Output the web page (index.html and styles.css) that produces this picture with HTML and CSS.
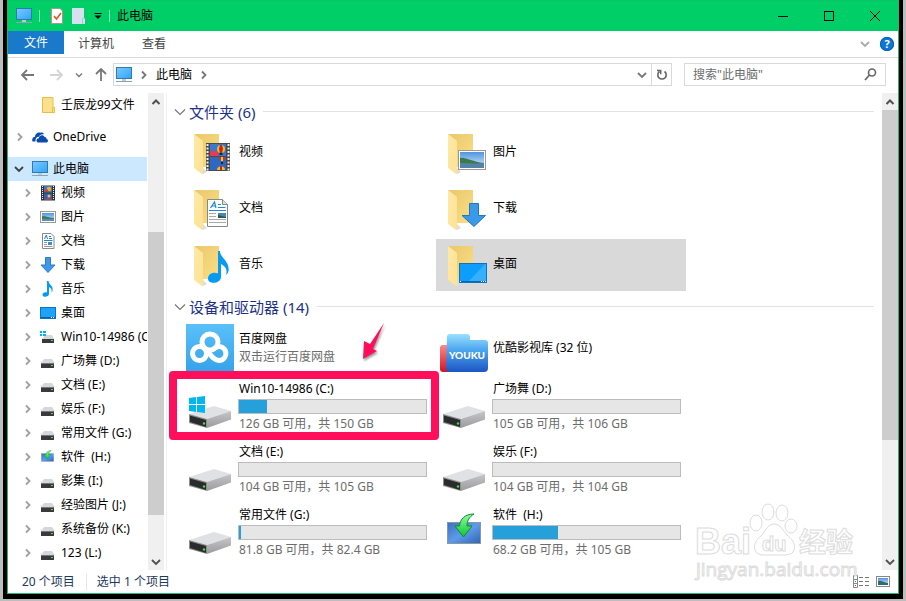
FILE: index.html
```html
<!DOCTYPE html>
<html lang="zh-CN">
<head>
    <meta charset="UTF-8">
    <meta name="viewport" content="width=device-width, initial-scale=1.0">
    <title>此电脑</title>
    <link rel="stylesheet" href="styles.css">
</head>
<body>
    <svg class="defs" aria-hidden="true">
        <defs>
            <linearGradient id="screen" x1="0" y1="0" x2="1" y2="1">
                <stop offset="0" stop-color="#7cc8ff"/>
                <stop offset="1" stop-color="#2ea6f5"/>
            </linearGradient>
            <linearGradient id="gold" x1="0" y1="0" x2="1" y2="1">
                <stop offset="0" stop-color="#eac76c"/>
                <stop offset="1" stop-color="#fbdf85"/>
            </linearGradient>
            <linearGradient id="flap" x1="0" y1="0" x2="1" y2="1">
                <stop offset="0" stop-color="#ffe9a6"/>
                <stop offset="1" stop-color="#fde293"/>
            </linearGradient>
            <linearGradient id="sky" x1="0" y1="0" x2="0" y2="1">
                <stop offset="0" stop-color="#4f95e0"/>
                <stop offset="1" stop-color="#dcecf8"/>
            </linearGradient>
            <linearGradient id="metal" x1="0" y1="0" x2="0" y2="1">
                <stop offset="0" stop-color="#c6c6c8"/>
                <stop offset="1" stop-color="#9b9b9d"/>
            </linearGradient>
            <linearGradient id="baidu" x1="0" y1="0" x2="0" y2="1">
                <stop offset="0" stop-color="#5ac0f8"/>
                <stop offset="1" stop-color="#35a3ea"/>
            </linearGradient>
            <linearGradient id="youku" x1="0" y1="0" x2="0" y2="1">
                <stop offset="0" stop-color="#9be0ff"/>
                <stop offset="0.4" stop-color="#4fa9f0"/>
                <stop offset="1" stop-color="#1c55c4"/>
            </linearGradient>
            <linearGradient id="red" x1="0" y1="0" x2="0" y2="1">
                <stop offset="0" stop-color="#f88"/>
                <stop offset="1" stop-color="#d01522"/>
            </linearGradient>
            <linearGradient id="green" x1="0" y1="0" x2="0" y2="1">
                <stop offset="0" stop-color="#8dffa0"/>
                <stop offset="1" stop-color="#0cc42c"/>
            </linearGradient>
            <linearGradient id="panel" x1="0" y1="0" x2="1" y2="1">
                <stop offset="0" stop-color="#3a6fc4"/>
                <stop offset="0.5" stop-color="#5d9bea"/>
                <stop offset="1" stop-color="#3263b4"/>
            </linearGradient>
        </defs>
        <symbol id="i-pc" viewBox="0 0 16 16">
            <rect x="0.5" y="0.5" width="15" height="11" fill="url(#screen)" stroke="#2f7ab0"/>
            <path d="M6 12h4v2H6z" fill="#b9cbd8"/>
            <path d="M0 14.500h16" stroke="#8ba4b5"/>
        </symbol>
        <symbol id="i-chev" viewBox="0 0 8 10">
            <path d="M2 1.5L5.5 5L2 8.5" fill="none" stroke="currentColor" stroke-width="1.8"/>
        </symbol>
        <symbol id="i-down" viewBox="0 0 10 8">
            <path d="M1 2L5 6L9 2" fill="none" stroke="currentColor" stroke-width="1.8"/>
        </symbol>
        <symbol id="i-thin" viewBox="0 0 12 8">
            <path d="M1 1.500L6 6.500L11 1.500" fill="none" stroke="currentColor" stroke-width="1.2"/>
        </symbol>
        <symbol id="i-up" viewBox="0 0 10 8">
            <path d="M1.5 6L5 2.5L8.5 6" fill="none" stroke="currentColor" stroke-width="2"/>
        </symbol>
        <symbol id="i-folder-s" viewBox="0 0 16 16">
            <path d="M2.5 0.5h10.500v10h1.500v5H2.500z" fill="#fde08a" stroke="#e8bd4a"/>
            <path d="M12.500 15v-4.500h2" fill="none" stroke="#e8bd4a"/>
        </symbol>
        <symbol id="i-cloud" viewBox="0 0 16 16">
            <path d="M0.500 12.500c-1-2.500 0.500-4.500 2.500-4.700c0-3 3-5 5.500-4c1-0.500 3 0 3.600 1.500c-3-0.500-4.600 0.700-5.100 2.500c-2.500 0-3.800 2-3.500 4.700z" fill="#0a4bb0"/>
            <path d="M5.500 13.500c-1.800-1-1.400-4.200 1.300-4.300c0.300-3.400 4.600-4 5.800-1.200c1.500 0 2 1 1.900 2c1.800 0.300 2 2.700 0.500 3.500z" fill="#0a4bb0"/>
        </symbol>
        <symbol id="i-film-s" viewBox="0 0 16 16">
            <rect x="1" y="0.500" width="14" height="15" fill="#333"/>
            <rect x="4" y="1" width="8" height="6.500" fill="#3f78c9"/>
            <rect x="4" y="8.500" width="8" height="6.500" fill="#2f63b5"/>
            <path d="M2.500 1v14M13.500 1v14" stroke="#eee" stroke-dasharray="1 1"/>
            <circle cx="9" cy="4" r="2.200" fill="#f0b020"/>
            <path d="M4 7l3-3l2 3zM6 15l2-3l3 3z" fill="#d8382c"/>
            <circle cx="9" cy="11" r="1.500" fill="#f5c830"/>
        </symbol>
        <symbol id="i-pic-s" viewBox="0 0 16 16">
            <rect x="0.500" y="2.500" width="15" height="11" fill="#fff" stroke="#9a9a9a"/>
            <rect x="2" y="4" width="12" height="8" fill="url(#sky)"/>
            <path d="M2 7c4 0 8 2 12 2v1H2z" fill="#3f7a63"/>
            <path d="M2 10h12v2H2z" fill="#5a8fb8"/>
        </symbol>
        <symbol id="i-doc-s" viewBox="0 0 16 16">
            <path d="M2.500 0.500h8.500l3 3v12H2.500z" fill="#fff" stroke="#8a8a8a"/>
            <path d="M4.500 6l1.800-4l1.200 4M9 3.500h2M9 5.500h3M4 7.500h8.500" fill="none" stroke="#1888d0"/>
            <path d="M4 9.500h3M4 11.500h3M4 13.500h8.500" stroke="#999"/>
            <rect x="8" y="9" width="4" height="3" fill="#4f87b5"/>
        </symbol>
        <symbol id="i-dl-s" viewBox="0 0 16 16">
            <path d="M5.500 0.500h5v7.500h4.500L8 15.500L1 8h4.500z" fill="#3d98e8" stroke="#2a7cc4"/>
        </symbol>
        <symbol id="i-note-s" viewBox="0 0 16 16">
            <path d="M7 0h1.500c0.500 4 5 4.500 4 9.500c0 1-0.600 1.500-1.200 2c1-3-0.300-4.500-2.300-5.500v7c0 3-6.500 4-6.500 0.700c0-2 2.500-3 4.500-2.200z" fill="#069af3"/>
        </symbol>
        <symbol id="i-desk-s" viewBox="0 0 16 16">
            <rect x="0.500" y="2.500" width="15" height="11" fill="#1aa3ff" stroke="#1272b8"/>
            <path d="M1 12.500h14" stroke="#0f5f9e"/>
            <path d="M11 12.500h4" stroke="#fff" stroke-dasharray="1 1"/>
        </symbol>
        <symbol id="i-drive-s" viewBox="0 0 16 16">
            <path d="M4 6h8l3 4H1z" fill="#d6d7da"/>
            <rect x="1" y="10" width="13" height="5" fill="#3a3a3c"/>
            <path d="M1 10.500h13" stroke="#777"/>
            <rect x="11" y="12" width="2" height="1" fill="#4fe04f"/>
        </symbol>
        <symbol id="i-win-s" viewBox="0 0 16 16">
            <path d="M5 6h7l2 4H2z" fill="#d6d7da"/>
            <rect x="2" y="10" width="12" height="4" fill="#3a3a3c"/>
            <rect x="11" y="11" width="2" height="1" fill="#4fe04f"/>
            <path d="M0 2h2v2H0zM3 2h3v2H3zM0 5h2v2H0zM3 5h3v2H3z" fill="#00b4ef"/>
        </symbol>
        <symbol id="i-soft" viewBox="0 0 34 32">
            <rect x="0.500" y="9.500" width="33" height="21" fill="url(#panel)" stroke="#8a9a9a"/>
            <path d="M27 1C18 1 13 6 12.500 13H8l8.500 11L25 13h-5c0-5 2-9 7-12z" fill="url(#green)" stroke="#148a2c"/>
        </symbol>
        <symbol id="i-folder" viewBox="0 0 48 48">
            <path d="M8 5h25v33H8z" fill="url(#gold)"/>
            <path d="M8 5l9 7v33l-1 0l-8-6z" fill="url(#flap)"/>
            <path d="M17 39v6l4-2z" fill="#ddd"/>
        </symbol>
        <symbol id="i-drive" viewBox="0 0 48 48">
            <path d="M3 31l25-8l17 5L21 36z" fill="#e0e1e4"/>
            <path d="M21 36l24-8v8.500L21 45z" fill="url(#metal)"/>
            <path d="M3 31l18 5v9L3 40z" fill="#8d8d90"/>
            <path d="M4 32.500l16 4.500v7L4 39z" fill="#2a2b2d"/>
            <circle cx="18" cy="40.500" r="1.200" fill="#3fe03f"/>
        </symbol>
    </svg>

    <div class="window">
        <header class="titlebar">
            <svg class="icon"><use href="#i-pc"/></svg>
            <span class="sep"></span>
            <button class="quick" aria-label="属性">
                <svg width="12" height="16" viewBox="0 0 12 16"><path d="M0.500 0.500H9l2.500 2.500v12.500H0.500z" fill="#fff" stroke="#a89a90"/><path d="M3 8l2.500 3L10 5" fill="none" stroke="#e8541c" stroke-width="1.600"/></svg>
            </button>
            <button class="quick" aria-label="新建文件夹">
                <svg width="13" height="16" viewBox="0 0 13 16"><path d="M0 0h12v10h1v6H0z" fill="#d5e0f0"/><path d="M10.500 16v-5.500H13" fill="none" stroke="#b4c4dc"/></svg>
            </button>
            <button class="quick" aria-label="自定义快速访问工具栏">
                <svg width="8" height="8" viewBox="0 0 8 8"><path d="M0.500 1.500h7" stroke="#000"/><path d="M0.500 3.500h7L4 7z" fill="#000"/></svg>
            </button>
            <span class="sep"></span>
            <h1>此电脑</h1>
            <div class="caption">
                <button aria-label="最小化"><svg width="10" height="10"><path d="M0 5.500h10" stroke="#000"/></svg></button>
                <button aria-label="最大化"><svg width="10" height="10"><rect x="0.500" y="0.500" width="9" height="9" fill="none" stroke="#000"/></svg></button>
                <button aria-label="关闭"><svg width="10" height="10"><path d="M0 0l10 10M10 0L0 10" stroke="#000"/></svg></button>
            </div>
        </header>

        <nav class="ribbon">
            <button class="tab file">文件</button>
            <button class="tab">计算机</button>
            <button class="tab">查看</button>
            <div class="ribbon-end">
                <button aria-label="展开功能区"><svg class="down light"><use href="#i-down"/></svg></button>
                <button class="help" aria-label="帮助">?</button>
            </div>
        </nav>

        <div class="toolbar">
            <div class="history">
                <button aria-label="后退"><svg width="13" height="12" viewBox="0 0 13 12"><path d="M1 6h12M6 1L1 6l5 5" fill="none" stroke="#777" stroke-width="1.800"/></svg></button>
                <button aria-label="前进"><svg width="13" height="12" viewBox="0 0 13 12"><path d="M0 6h12M7 1l5 5l-5 5" fill="none" stroke="#d5d5d5" stroke-width="1.800"/></svg></button>
                <button aria-label="最近浏览的位置"><svg class="down tiny"><use href="#i-down"/></svg></button>
                <button aria-label="上移"><svg width="12" height="13" viewBox="0 0 12 13"><path d="M6 1v12M1 6l5-5l5 5" fill="none" stroke="#777" stroke-width="1.800"/></svg></button>
            </div>
            <div class="address">
                <svg class="icon"><use href="#i-pc"/></svg>
                <svg class="chev"><use href="#i-chev"/></svg>
                <a href="#">此电脑</a>
                <svg class="chev"><use href="#i-chev"/></svg>
                <button class="drop" aria-label="以前的位置"><svg class="down"><use href="#i-down"/></svg></button>
                <button class="refresh" aria-label="刷新"><svg width="12" height="12" viewBox="0 0 12 12"><path d="M8.500 2.500A4.200 4.200 0 1 1 3.500 2.500" fill="none" stroke="#666" stroke-width="1.600"/><path d="M1 1.500h3.700v3.700" fill="none" stroke="#666" stroke-width="1.500"/></svg></button>
            </div>
            <form class="search">
                <input type="text" aria-label="搜索" placeholder='搜索"此电脑"'>
                <button type="button" aria-label="搜索"><svg width="13" height="13" viewBox="0 0 13 13"><circle cx="8" cy="4.500" r="3.500" fill="none" stroke="#666" stroke-width="1.600"/><path d="M5.500 7L1 12" stroke="#666" stroke-width="1.800"/></svg></button>
            </form>
        </div>

        <div class="content">
            <aside class="sidebar">
                <a class="node leaf" href="#"><svg class="icon"><use href="#i-folder-s"/></svg>壬辰龙99文件</a>
                <a class="node root" href="#"><svg class="chev"><use href="#i-chev"/></svg><svg class="icon"><use href="#i-cloud"/></svg>OneDrive</a>
                <a class="node root open" href="#"><svg class="down"><use href="#i-down"/></svg><svg class="icon"><use href="#i-pc"/></svg>此电脑</a>
                <a class="node" href="#"><svg class="chev"><use href="#i-chev"/></svg><svg class="icon"><use href="#i-film-s"/></svg>视频</a>
                <a class="node" href="#"><svg class="chev"><use href="#i-chev"/></svg><svg class="icon"><use href="#i-pic-s"/></svg>图片</a>
                <a class="node" href="#"><svg class="chev"><use href="#i-chev"/></svg><svg class="icon"><use href="#i-doc-s"/></svg>文档</a>
                <a class="node" href="#"><svg class="chev"><use href="#i-chev"/></svg><svg class="icon"><use href="#i-dl-s"/></svg>下载</a>
                <a class="node" href="#"><svg class="chev"><use href="#i-chev"/></svg><svg class="icon"><use href="#i-note-s"/></svg>音乐</a>
                <a class="node" href="#"><svg class="chev"><use href="#i-chev"/></svg><svg class="icon"><use href="#i-desk-s"/></svg>桌面</a>
                <a class="node" href="#"><svg class="chev"><use href="#i-chev"/></svg><svg class="icon"><use href="#i-win-s"/></svg>Win10-14986 (C:)</a>
                <a class="node" href="#"><svg class="chev"><use href="#i-chev"/></svg><svg class="icon"><use href="#i-drive-s"/></svg>广场舞 (D:)</a>
                <a class="node" href="#"><svg class="chev"><use href="#i-chev"/></svg><svg class="icon"><use href="#i-drive-s"/></svg>文档 (E:)</a>
                <a class="node" href="#"><svg class="chev"><use href="#i-chev"/></svg><svg class="icon"><use href="#i-drive-s"/></svg>娱乐 (F:)</a>
                <a class="node" href="#"><svg class="chev"><use href="#i-chev"/></svg><svg class="icon"><use href="#i-drive-s"/></svg>常用文件 (G:)</a>
                <a class="node" href="#"><svg class="chev"><use href="#i-chev"/></svg><svg class="icon"><use href="#i-soft" width="13" height="12" x="1" y="1"/></svg>软件&nbsp; (H:)</a>
                <a class="node" href="#"><svg class="chev"><use href="#i-chev"/></svg><svg class="icon"><use href="#i-drive-s"/></svg>影集 (I:)</a>
                <a class="node" href="#"><svg class="chev"><use href="#i-chev"/></svg><svg class="icon"><use href="#i-drive-s"/></svg>经验图片 (J:)</a>
                <a class="node" href="#"><svg class="chev"><use href="#i-chev"/></svg><svg class="icon"><use href="#i-drive-s"/></svg>系统备份 (K:)</a>
                <a class="node" href="#"><svg class="chev"><use href="#i-chev"/></svg><svg class="icon"><use href="#i-drive-s"/></svg>123 (L:)</a>
            </aside>
            <div class="scrollbar side-scroll">
                <svg class="down"><use href="#i-up"/></svg>
                <span class="before"></span><span class="thumb"></span><span class="after"></span>
                <svg class="down"><use href="#i-down"/></svg>
            </div>

            <main class="files">
                <h2><svg class="thin"><use href="#i-thin"/></svg>文件夹 (6)</h2>
                <div class="grid folders">
                    <a class="item" href="#">
                        <svg class="big" viewBox="0 0 48 48">
                            <use href="#i-folder"/>
                            <rect x="20" y="14" width="24" height="28" fill="#4a4a4a"/>
                            <path d="M21.500 15v27M42.500 15v27" stroke="#f0f0f0" stroke-width="2" stroke-dasharray="2 1.500"/>
                            <rect x="24" y="15" width="16" height="12" fill="#3a78d0"/>
                            <rect x="24" y="28" width="16" height="13" fill="#2f68c4"/>
                            <path d="M24 27v-4l3-2l2 2l3-1v5z" fill="#e83a50"/>
                            <circle cx="35" cy="20" r="4" fill="#f3b71c"/>
                            <path d="M34 16h2l1 4l-1 4h-2l-1-4z" fill="#c22820"/>
                            <path d="M33.500 24h3v2h-3z" fill="#222"/>
                            <path d="M32 28h8l-2.500 4h-3z" fill="#d42e26"/>
                            <path d="M35 28h2v4h-2z" fill="#f5d030"/>
                            <path d="M35 33h2v2h-2z" fill="#222"/>
                            <path d="M31 41c0-5 8-5 8 0z" fill="#f0c020"/>
                            <path d="M34 37h2v4h-2z" fill="#c22820"/>
                        </svg>
                        <span class="name">视频</span>
                    </a>
                    <a class="item" href="#">
                        <svg class="big" viewBox="0 0 48 48">
                            <use href="#i-folder"/>
                            <rect x="18.500" y="21.500" width="27" height="19" fill="#fff" stroke="#999"/>
                            <rect x="20" y="23" width="24" height="16" fill="url(#sky)"/>
                            <path d="M20 29c6-1 12 4 24 5v2H20z" fill="#3c7a4c"/>
                            <path d="M20 34c8 0 16 1 24 0v5H20z" fill="#5384a8"/>
                        </svg>
                        <span class="name">图片</span>
                    </a>
                    <a class="item" href="#">
                        <svg class="big" viewBox="0 0 48 48">
                            <use href="#i-folder"/>
                            <path d="M21.500 14.500h15l5 5v22h-20z" fill="#fcfcfc" stroke="#888"/>
                            <path d="M36.500 14.500v5h5" fill="#ddd" stroke="#888"/>
                            <path d="M24.500 23l4-6l1.500 6M26 21h3M32 19.500h3M32 22.500h7.500M23 25.500h17" fill="none" stroke="#1c8ad4" stroke-width="1.200"/>
                            <path d="M23 28.500h7M23 31.500h7M23 34.500h17M23 37.500h17" stroke="#aaa"/>
                            <rect x="32" y="28" width="8" height="5" fill="#4b86b4"/>
                            <path d="M32 30l8 2v1h-8z" fill="#2d5a4c"/>
                        </svg>
                        <span class="name">文档</span>
                    </a>
                    <a class="item" href="#">
                        <svg class="big" viewBox="0 0 48 48">
                            <use href="#i-folder"/>
                            <path d="M29.500 18.500h9v12h7L34 41.500L22 30.500h7.500z" fill="#3a99e8" stroke="#2277bd"/>
                        </svg>
                        <span class="name">下载</span>
                    </a>
                    <a class="item" href="#">
                        <svg class="big" viewBox="0 0 48 48">
                            <use href="#i-folder"/>
                            <path d="M32 10h2c0 7 10 10 8.500 20c-0.500 2-1.500 3-2.500 4c2-7-2-9-5-11v13c0 7-13 8-13 1.500c0-5 6-7 10-5z" fill="#069af3"/>
                        </svg>
                        <span class="name">音乐</span>
                    </a>
                    <a class="item selected" href="#">
                        <svg class="big" viewBox="0 0 48 48">
                            <use href="#i-folder"/>
                            <rect x="19.500" y="22.500" width="27" height="19" fill="#0c9dff" stroke="#1272b8"/>
                            <path d="M46 23v17H29L45 23z" fill="#34b0ff"/>
                            <path d="M20 40.500h26" stroke="#0c66a8"/>
                            <path d="M20 40.500h1M41 40.500h5" stroke="#fff" stroke-dasharray="1 1"/>
                        </svg>
                        <span class="name">桌面</span>
                    </a>
                </div>

                <h2><svg class="thin"><use href="#i-thin"/></svg>设备和驱动器 (14)</h2>
                <div class="grid drives">
                    <a class="item" href="#">
                        <svg class="big" viewBox="0 0 48 48">
                            <rect width="48" height="48" fill="url(#baidu)"/>
                            <g fill="none" stroke="#fff" stroke-width="5">
                                <circle cx="24" cy="18" r="8"/>
                                <circle cx="13.500" cy="29.500" r="7"/>
                                <path d="M20 25c4 4 6 11 13 11.500a7 7 0 1 0-5-12"/>
                            </g>
                        </svg>
                        <span class="info">
                            <span class="name">百度网盘</span>
                            <span class="note">双击运行百度网盘</span>
                        </span>
                        <svg class="pointer" width="24" height="40" viewBox="0 0 24 40"><path d="M22 1L8 22L2 19L1 37L15 29L11 27z" fill="#ff0f5b"/></svg>
                    </a>
                    <a class="item" href="#">
                        <svg class="big" viewBox="0 0 48 48">
                            <rect x="0" y="21" width="12" height="27" rx="3" fill="url(#red)"/>
                            <path d="M7 13q0-3 3-3h17q3 0 3 3v3h15q3 0 3 3v25q0 4-4 4H10q-4 0-4-4z" fill="url(#youku)"/>
                            <text x="27" y="35" class="youku-text">YOUKU</text>
                        </svg>
                        <span class="name">优酷影视库 (32 位)</span>
                    </a>
                    <a class="item marked" href="#">
                        <svg class="big" viewBox="0 0 48 48">
                            <use href="#i-drive"/>
                            <path d="M3 15l7-1v7H3zM11 14l8-1v8h-8zM3 22h7v7l-7-1zM11 22h8v8l-8-1z" fill="#00b7f0"/>
                        </svg>
                        <span class="info">
                            <span class="name">Win10-14986 (C:)</span>
                            <span class="bar"><span style="width: 15%"></span></span>
                            <span class="note">126 GB 可用，共 150 GB</span>
                        </span>
                    </a>
                    <a class="item" href="#">
                        <svg class="big"><use href="#i-drive"/></svg>
                        <span class="info">
                            <span class="name">广场舞 (D:)</span>
                            <span class="bar"><span style="width: 0%"></span></span>
                            <span class="note">105 GB 可用，共 106 GB</span>
                        </span>
                    </a>
                    <a class="item" href="#">
                        <svg class="big"><use href="#i-drive"/></svg>
                        <span class="info">
                            <span class="name">文档 (E:)</span>
                            <span class="bar"><span style="width: 0%"></span></span>
                            <span class="note">104 GB 可用，共 105 GB</span>
                        </span>
                    </a>
                    <a class="item" href="#">
                        <svg class="big"><use href="#i-drive"/></svg>
                        <span class="info">
                            <span class="name">娱乐 (F:)</span>
                            <span class="bar"><span style="width: 0%"></span></span>
                            <span class="note">104 GB 可用，共 104 GB</span>
                        </span>
                    </a>
                    <a class="item" href="#">
                        <svg class="big"><use href="#i-drive"/></svg>
                        <span class="info">
                            <span class="name">常用文件 (G:)</span>
                            <span class="bar"><span style="width: 1%"></span></span>
                            <span class="note">81.8 GB 可用，共 82.4 GB</span>
                        </span>
                    </a>
                    <a class="item" href="#">
                        <svg class="big" viewBox="0 0 48 48"><use href="#i-soft" x="7" y="4" width="34" height="32"/></svg>
                        <span class="info">
                            <span class="name">软件&nbsp; (H:)</span>
                            <span class="bar"><span style="width: 35%"></span></span>
                            <span class="note">68.2 GB 可用，共 105 GB</span>
                        </span>
                    </a>
                </div>
            </main>
            <div class="scrollbar main-scroll">
                <svg class="down"><use href="#i-up"/></svg>
                <span class="thumb"></span><span class="after"></span>
                <svg class="down"><use href="#i-down"/></svg>
            </div>
        </div>

        <footer class="status">
            <span>20 个项目</span>
            <span>选中 1 个项目</span>
            <div class="views">
                <button aria-label="详细信息"><svg width="16" height="13" viewBox="0 0 16 13"><path d="M0.500 0.500h4v12h-4zM0.500 4.500h4M0.500 8.500h4" fill="none" stroke="#888"/><path d="M6 2.500h10M6 6.500h10M6 10.500h10" stroke="#777" stroke-dasharray="4 2"/><path d="M2 6.500h1" stroke="#28c"/><path d="M2 10.500h1" stroke="#d22"/></svg></button>
                <button aria-label="大图标"><svg width="14" height="11" viewBox="0 0 14 11"><rect x="0.500" y="0.500" width="13" height="10" fill="#fff" stroke="#888"/><rect x="2" y="2" width="10" height="7" fill="url(#sky)"/><path d="M2 5c3-1 6 2 10 2v2H2z" fill="#2f6a75"/></svg></button>
            </div>
        </footer>

        <svg class="watermark" width="166" height="82" viewBox="0 0 166 82">
            <g class="outline">
                <ellipse cx="64" cy="22" rx="6" ry="8"/>
                <ellipse cx="76" cy="11" rx="6" ry="8"/>
                <ellipse cx="90" cy="12" rx="6" ry="8"/>
                <ellipse cx="99" cy="25" rx="6" ry="7"/>
                <path d="M82 23c6 0 8 5 13 11c5 4 9 9 7 15c-2 6-9 5-20 5s-17 1-19-5c-2-6 2-11 7-15c4-5 6-11 12-11z"/>
                <text class="brand" x="3" y="53">Bai</text>
                <text class="du" x="70" y="50">du</text>
                <text class="cn" x="107" y="51">经验</text>
            </g>
            <text class="site outline" x="4" y="75">jingyan.baidu.com</text>
        </svg>
    </div>
</body>
</html>
```

FILE: styles.css
```css
* {
    box-sizing: border-box;
}

body {
    margin: 0;
    min-height: 100vh;
    padding: 0 3px 2px;
    display: flex;
    background-color: #bdbdbd;
    color: #000;
    font-family: "Noto Sans", "Noto Sans CJK SC", sans-serif;
    font-size: 12px;
    line-height: 16px;
}

a {
    color: inherit;
    text-decoration: none;
}

button {
    display: flex;
    align-items: center;
    justify-content: center;
    padding: 0;
    border: 0;
    background: none;
    color: inherit;
    font: inherit;
}

svg {
    flex: none;
    display: block;
}

.defs {
    position: absolute;
    width: 0;
    height: 0;
}

.icon {
    width: 16px;
    height: 16px;
}

.chev {
    width: 8px;
    height: 10px;
    color: #777;
}

.down {
    width: 10px;
    height: 8px;
    color: #777;
}

.down.light {
    color: #aaa;
}

.down.tiny {
    width: 8px;
    height: 6px;
}

.thin {
    width: 12px;
    height: 8px;
    color: #777;
}

.window {
    position: relative;
    flex: 1;
    min-width: 0;
    display: flex;
    flex-direction: column;
    padding: 0 1px 1px;
    background: #fff;
    border: solid #000;
    border-width: 0 4px 5px;
    box-shadow: inset 1px -1px #1fb573, inset -1px 0 #1fb573;
}

/* Title bar */
.titlebar {
    display: flex;
    align-items: center;
    height: 31px;
    padding-left: 8px;
    background: #00cf68;
    border-top: 1px solid #0cc36a;
}

.titlebar .sep {
    width: 1px;
    height: 12px;
    margin: 0 7px;
    background: #8be8b8;
}

.titlebar .quick {
    margin-left: 9px;
}

.titlebar .sep + .quick {
    margin-left: 4px;
}

.titlebar h1 {
    margin: 0;
    font-size: 12px;
    font-weight: 400;
}

.caption {
    display: flex;
    margin-left: auto;
}

.caption button {
    width: 46px;
    height: 30px;
}

/* Ribbon tabs */
.ribbon {
    display: flex;
    height: 27px;
    border-bottom: 1px solid #dadbdc;
}

.tab {
    height: 25px;
    padding: 0 14px;
    color: #444;
}

.tab.file {
    height: 23px;
    padding: 0 16px;
    background: #1979ca;
    color: #fff;
}

.ribbon-end {
    display: flex;
    align-items: center;
    gap: 10px;
    margin-left: auto;
    padding-right: 4px;
}

.help {
    width: 14px;
    height: 14px;
    border-radius: 50%;
    background: #0b78d8;
    box-shadow: inset 0 0 0 1px #0a5cab;
    color: #fff;
    font-weight: 700;
    font-size: 11px;
}

/* Address row */
.toolbar {
    display: flex;
    align-items: center;
    gap: 12px;
    height: 35px;
    padding: 0 12px 2px;
}

.history {
    display: flex;
    align-items: center;
    gap: 12px;
    padding-left: 1px;
    margin-right: -6px;
}

.history button:first-child {
    margin-right: 4px;
}

.address,
.search {
    display: flex;
    align-items: center;
    height: 23px;
    border: 1px solid #d9d9d9;
    background: #fff;
}

.address {
    flex: 1;
    gap: 8px;
    padding-left: 2px;
}

.address .drop {
    margin-left: auto;
}

.address .refresh {
    align-self: stretch;
    width: 20px;
    margin-left: -4px;
    border-left: 1px solid #d9d9d9;
}

.search {
    width: 202px;
    margin: 0;
    padding: 0 8px;
}

.search input {
    flex: 1;
    min-width: 0;
    padding: 0;
    border: 0;
    outline: none;
    background: none;
    font: inherit;
}

.search input::placeholder {
    color: #6d6d6d;
}

/* Navigation pane */
.content {
    flex: 1;
    display: flex;
}

.sidebar {
    width: 139px;
    padding-bottom: 5px;
    margin-right: 1px;
}

.node {
    display: flex;
    align-items: center;
    gap: 5px;
    height: 24px;
    padding-left: 16px;
    overflow: hidden;
    white-space: nowrap;
}

.node .icon {
    margin-left: 3px;
}

.node .chev {
    color: #a0a0a0;
}

.node.leaf {
    padding-left: 29px;
}

.node.root {
    margin-top: 8px;
    padding-left: 8px;
}

.node.root.open {
    padding-left: 6px;
    background: #cce8ff;
}

.node.open .down {
    color: #404040;
}

/* Scroll bars */
.scrollbar {
    display: flex;
    flex-direction: column;
    align-items: center;
    width: 16px;
    padding: 5px 0 4px;
    background: #f0f0f0;
}

.scrollbar .down {
    color: #505050;
}

.scrollbar .thumb {
    width: 100%;
    margin: 4px 0;
    background: #cdcdcd;
}

.side-scroll .before {
    flex: 122;
}

.side-scroll .thumb {
    flex: 282;
}

.side-scroll .after {
    flex: 39;
}

.main-scroll .thumb {
    flex: 329;
}

.main-scroll .after {
    flex: 114;
}

/* File list */
.files {
    flex: 1;
    min-width: 0;
    margin-left: 2px;
    padding: 8px 8px 8px 7px;
    border-left: 1px solid #f0f0f0;
}

.files h2 {
    display: flex;
    align-items: center;
    gap: 3px;
    height: 22px;
    margin: 0 0 4px;
    padding-bottom: 1px;
    color: #1e3287;
    font-size: 15px;
    font-weight: 400;
    white-space: nowrap;
}

.files h2::after {
    content: "";
    flex: 1;
    height: 1px;
    margin-left: 5px;
    background: #e2e2e2;
}

.grid {
    display: grid;
    grid-template-columns: repeat(auto-fill, 250px);
    grid-auto-rows: 52px;
    gap: 4px;
    margin: 0 0 5px 8px;
}

.grid.drives {
    grid-template-rows: 51px;
    grid-auto-rows: 59px;
    margin-bottom: 0;
}

.item {
    position: relative;
    display: flex;
    align-items: center;
    gap: 4px;
    padding: 0 4px;
}

.item.selected {
    background: #d9d9d9;
}

.item .big {
    width: 48px;
    height: 48px;
}

.info {
    display: flex;
    flex-direction: column;
    gap: 2px;
}

.name,
.note {
    padding-left: 1px;
    white-space: nowrap;
}

.folders .name {
    padding-bottom: 2px;
}

.note {
    color: #6d6d6d;
}

.bar {
    display: block;
    width: 189px;
    height: 15px;
    border: 1px solid #bcbcbc;
    background: #e6e6e6;
}

.bar span {
    display: block;
    height: 100%;
    background: #26a0da;
}

.youku-text {
    fill: #fff;
    font: 900 10px Lato, sans-serif;
    text-anchor: middle;
}

/* Red frame and arrow drawn over the list */
.marked::after {
    content: "";
    position: absolute;
    inset: -6px -7px -4px -13px;
    border: 8px solid #ff0f5b;
    border-radius: 4px;
}

.pointer {
    position: absolute;
    left: 180px;
    top: 0;
    filter: drop-shadow(1px 2px 1px rgba(0, 0, 0, 0.4));
}

/* Status bar */
.status {
    display: flex;
    align-items: center;
    height: 23px;
    padding: 0 8px 0 14px;
    color: #1e395b;
}

.status span + span {
    margin-left: 11px;
    padding-left: 10px;
    border-left: 1px solid #e6e6e6;
}

.views {
    display: flex;
    gap: 7px;
    margin-left: auto;
}

.watermark {
    position: absolute;
    right: 41px;
    bottom: 11px;
    pointer-events: none;
}

.outline {
    fill: #fff;
    stroke: #dcdcdc;
}

.brand {
    font: 700 36px "Liberation Sans", sans-serif;
}

.du {
    font: 700 20px "Liberation Sans", sans-serif;
}

.cn {
    font: 700 27px "Noto Sans CJK SC", sans-serif;
}

.site {
    font: 400 19px "Open Sans", sans-serif;
}
```
